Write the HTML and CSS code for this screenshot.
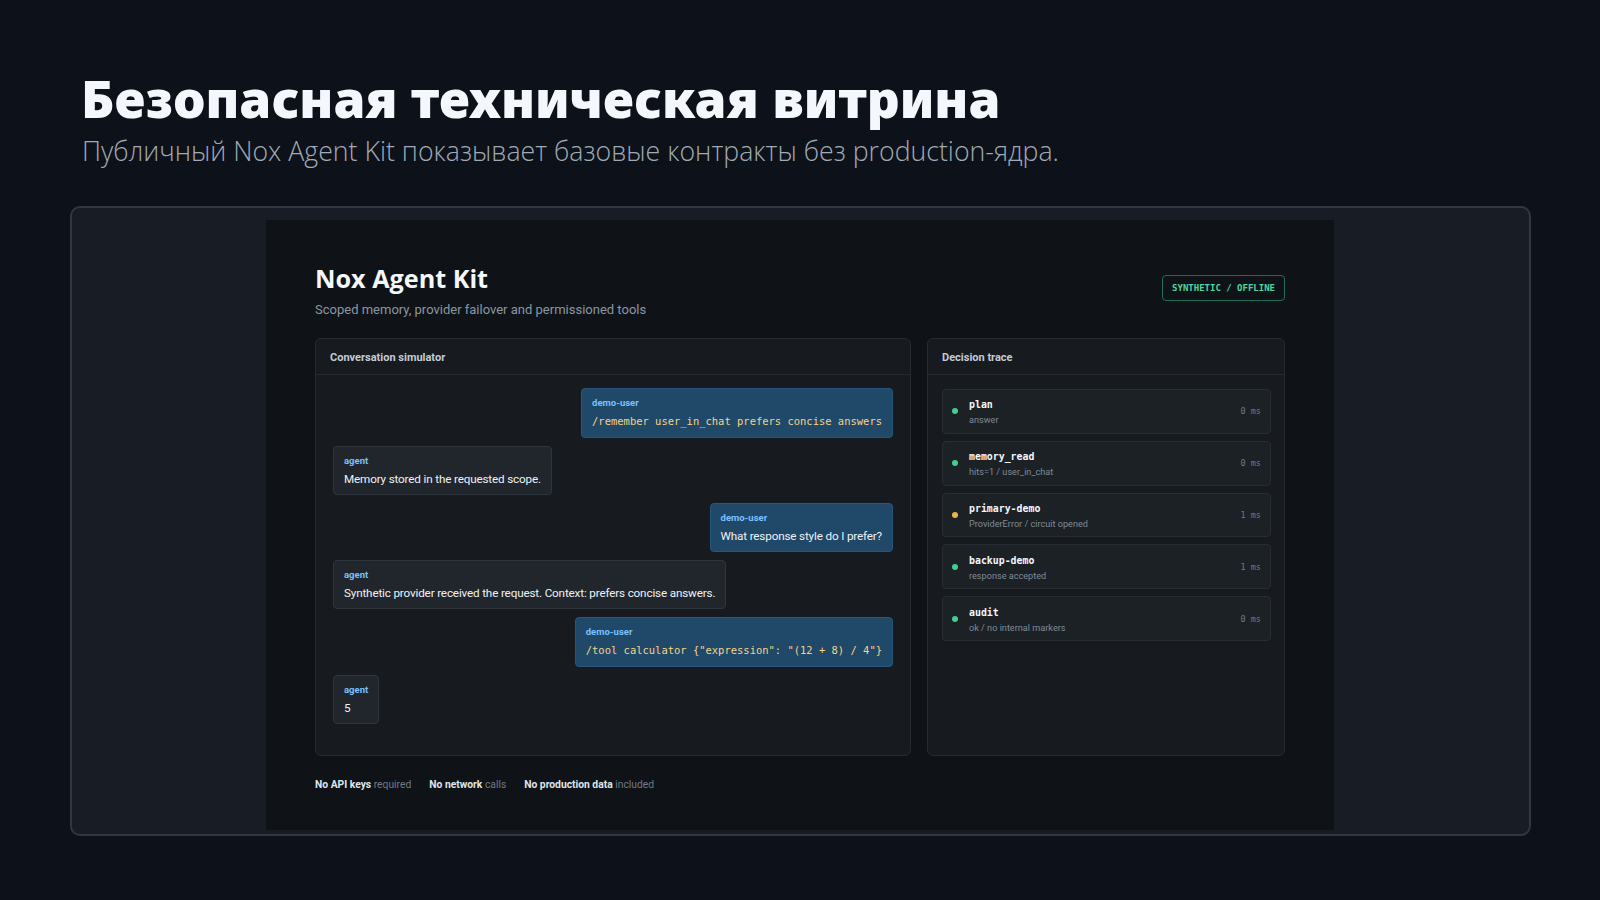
FILE: index.html
```html
<!DOCTYPE html>
<html lang="ru">
<head>
  <meta charset="UTF-8">
  <title>Nox Agent Kit</title>
  <link rel="stylesheet" href="styles.css">
</head>
<body>
  <!-- Slide heading -->
  <header class="slide-head">
    <h1>Безопасная техническая витрина</h1>
    <p>Публичный Nox Agent Kit показывает базовые контракты без production-ядра.</p>
  </header>

  <!-- Screenshot frame -->
  <div class="frame">
    <main class="app">
      <div class="app-head">
        <div>
          <h2>Nox Agent Kit</h2>
          <p>Scoped memory, provider failover and permissioned tools</p>
        </div>
        <span class="badge">SYNTHETIC / OFFLINE</span>
      </div>

      <div class="columns">
        <section class="card">
          <div class="card-title">Conversation simulator</div>
          <div class="chat">
            <div class="msg user cmd">
              <div class="who">demo-user</div>
              <code>/remember user_in_chat prefers concise answers</code>
            </div>
            <div class="msg">
              <div class="who">agent</div>
              <div>Memory stored in the requested scope.</div>
            </div>
            <div class="msg user">
              <div class="who">demo-user</div>
              <div>What response style do I prefer?</div>
            </div>
            <div class="msg">
              <div class="who">agent</div>
              <div>Synthetic provider received the request. Context: prefers concise answers.</div>
            </div>
            <div class="msg user cmd">
              <div class="who">demo-user</div>
              <code>/tool calculator {"expression": "(12 + 8) / 4"}</code>
            </div>
            <div class="msg">
              <div class="who">agent</div>
              <div>5</div>
            </div>
          </div>
        </section>

        <section class="card">
          <div class="card-title">Decision trace</div>
          <div class="trace">
            <div class="step">
              <span class="dot"></span>
              <div class="step-info"><code>plan</code><small>answer</small></div>
              <span class="ms">0 ms</span>
            </div>
            <div class="step">
              <span class="dot"></span>
              <div class="step-info"><code>memory_read</code><small>hits=1 / user_in_chat</small></div>
              <span class="ms">0 ms</span>
            </div>
            <div class="step">
              <span class="dot warn"></span>
              <div class="step-info"><code>primary-demo</code><small>ProviderError / circuit opened</small></div>
              <span class="ms">1 ms</span>
            </div>
            <div class="step">
              <span class="dot"></span>
              <div class="step-info"><code>backup-demo</code><small>response accepted</small></div>
              <span class="ms">1 ms</span>
            </div>
            <div class="step">
              <span class="dot"></span>
              <div class="step-info"><code>audit</code><small>ok / no internal markers</small></div>
              <span class="ms">0 ms</span>
            </div>
          </div>
        </section>
      </div>

      <div class="notes">
        <span><b>No API keys</b> required</span>
        <span><b>No network</b> calls</span>
        <span><b>No production data</b> included</span>
      </div>
    </main>
  </div>
</body>
</html>
```

FILE: styles.css
```css
/* General */
* {
  box-sizing: border-box;
}

body {
  margin: 0;
  height: 900px;
  overflow: hidden;
  background-color: #0d1119;
  font-family: Roboto, "Open Sans", sans-serif;
  color: #e6edf3;
}

code {
  font-family: "DejaVu Sans Mono", monospace;
}

/* Slide heading */
.slide-head {
  height: 206px;
  padding: 67px 0 0 81px;
  font-family: "Noto Sans", sans-serif;
}

.slide-head h1 {
  margin: 0;
  font-size: 51.5px;
  line-height: 62px;
  font-weight: 900;
  color: #f4f7fb;
}

.slide-head p {
  margin: 4px 0 0 1px;
  font-family: "Open Sans", sans-serif;
  font-size: 26.7px;
  line-height: 36px;
  font-weight: 300;
  color: #a0aab6;
}

/* Frame */
.frame {
  width: 1461px;
  height: 630px;
  margin-left: 70px;
  padding: 12px 0 4px;
  background-color: #181c24;
  border: 2px solid #2f3644;
  border-radius: 10px;
}

.app {
  width: 1068px;
  height: 610px;
  margin-left: 194px;
  padding: 42px 49px 0;
  background-color: #0f1317;
}

.app-head {
  display: flex;
  justify-content: space-between;
  align-items: flex-start;
  height: 76px;
}

.app-head h2 {
  margin: 0;
  font-family: "Open Sans", sans-serif;
  font-size: 25.2px;
  line-height: 32px;
  font-weight: 700;
  color: #f4f7fb;
}

.app-head p {
  margin: 6px 0 0;
  font-size: 13px;
  line-height: 20px;
  color: #8b96a3;
}

.badge {
  margin-top: 13px;
  padding: 5px 9px;
  border: 1px solid #1f6f56;
  border-radius: 4px;
  font-family: "DejaVu Sans Mono", monospace;
  font-size: 9px;
  font-weight: 700;
  line-height: 14px;
  color: #4fd6a0;
}

/* Cards */
.columns {
  display: grid;
  grid-template-columns: 596px 358px;
  gap: 16px;
  height: 418px;
}

.card {
  background-color: #171b1f;
  border: 1px solid #262b31;
  border-radius: 6px;
}

.card-title {
  height: 36px;
  padding: 1px 14px 0;
  border-bottom: 1px solid #262b31;
  font-size: 11px;
  font-weight: 700;
  line-height: 36px;
  color: #c3ccd6;
}

/* Chat */
.chat {
  display: flex;
  flex-direction: column;
  align-items: flex-start;
  gap: 8px;
  padding: 13px 17px;
}

.msg {
  height: 49px;
  padding: 8px 10px;
  background-color: #21262c;
  border: 1px solid #2f353c;
  border-radius: 4px;
  font-size: 11.7px;
  letter-spacing: -0.16px;
  line-height: 18px;
  color: #eef2f6;
}

.msg.user {
  align-self: flex-end;
  background-color: #1f4869;
  border-color: #28577d;
}

.msg.cmd {
  height: 50px;
}

.msg code {
  display: block;
  font-size: 10.47px;
  letter-spacing: 0;
  color: #f5d488;
}

.who {
  margin-bottom: 3px;
  font-size: 9.5px;
  font-weight: 700;
  letter-spacing: 0;
  line-height: 12px;
  color: #79c0ff;
}

/* Trace */
.trace {
  display: flex;
  flex-direction: column;
  gap: 7px;
  padding: 14px 13px 14px 14px;
}

.step {
  display: flex;
  align-items: center;
  height: 44.8px;
  padding: 0 9px;
  background-color: #1c2126;
  border: 1px solid #282d33;
  border-radius: 4px;
}

.dot {
  width: 6px;
  height: 6px;
  margin-right: 11px;
  border-radius: 50%;
  background-color: #3fcf8e;
}

.dot.warn {
  background-color: #e8b64c;
}

.step-info {
  flex: 1;
  display: flex;
  flex-direction: column;
  padding-top: 3px;
}

.step-info code {
  font-size: 9.9px;
  font-weight: 700;
  line-height: 15px;
  color: #f4f7fb;
}

.step-info small {
  margin-top: 1px;
  font-size: 9.15px;
  line-height: 15px;
  color: #7f8a96;
}

.ms {
  font-family: "DejaVu Sans Mono", monospace;
  font-size: 8.5px;
  color: #6f7a86;
}

/* Footer notes */
.notes {
  display: flex;
  gap: 18px;
  margin-top: 21px;
  font-size: 10.3px;
  line-height: 16px;
  color: #6f7a86;
}

.notes b {
  color: #dfe5ec;
}
```
